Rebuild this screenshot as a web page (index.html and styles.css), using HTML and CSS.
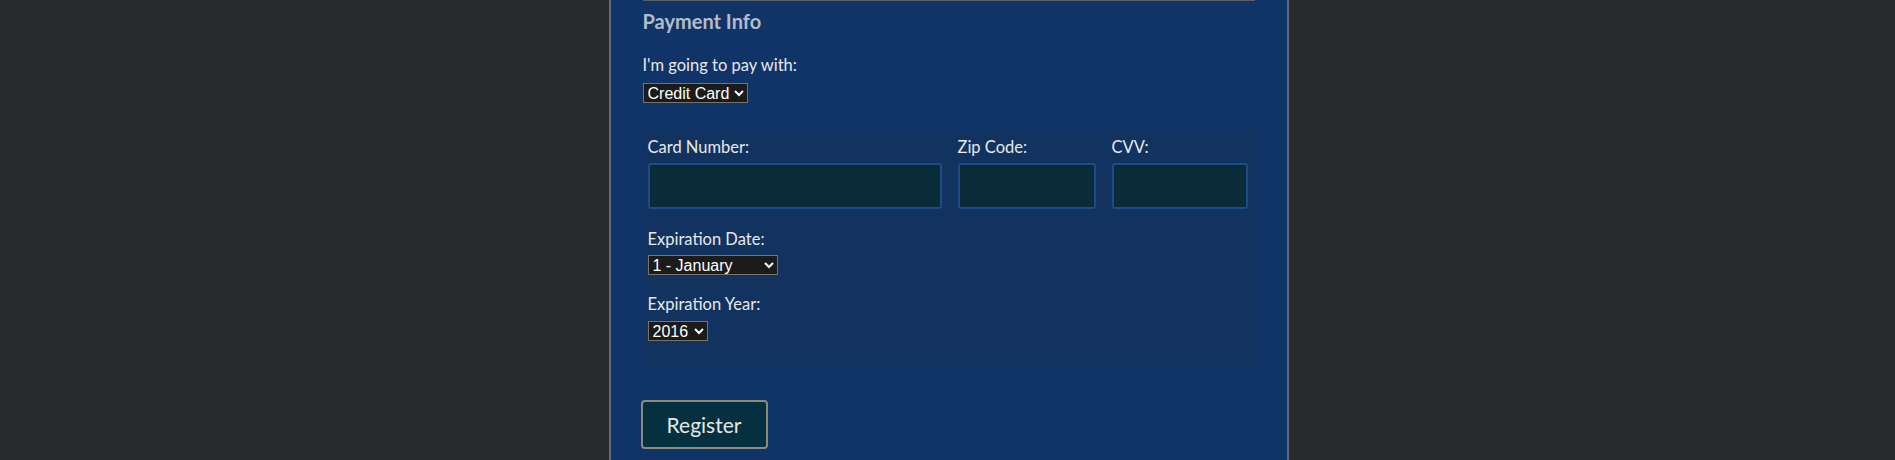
FILE: index.html
```html
<!DOCTYPE html>
<html>
<head>
<meta charset="utf-8">
<link rel="stylesheet" href="styles.css">
</head>
<body>
<div class="page">
  <form class="panel">
    <div class="rule"></div>
    <h2 class="legend">Payment Info</h2>
    <label class="lbl pay-lbl">I'm going to pay with:</label>
    <select class="sel sel-pay"><option>Credit Card</option></select>
    <div class="card">
      <div class="grid">
        <div class="field">
          <label class="lbl">Card Number:</label>
          <input class="txt" type="text">
        </div>
        <div class="field">
          <label class="lbl">Zip Code:</label>
          <input class="txt" type="text">
        </div>
        <div class="field">
          <label class="lbl">CVV:</label>
          <input class="txt" type="text">
        </div>
      </div>
      <label class="lbl exp-lbl">Expiration Date:</label>
      <select class="sel sel-month"><option>1 - January</option></select>
      <label class="lbl year-lbl">Expiration Year:</label>
      <select class="sel sel-year"><option>2016</option></select>
    </div>
    <button class="btn" type="button">Register</button>
  </form>
</div>
</body>
</html>
```
FILE: styles.css
```css
html, body {
  margin: 0;
  padding: 0;
  background: #272b2c;
  height: 100%;
  overflow: hidden;
}
.page {
  display: flex;
  justify-content: center;
  padding-left: 2px;
}
.panel {
  width: 612px;
  background: #113468;
  border-left: 2px solid #5f6b7a;
  border-right: 2px solid #5f6b7a;
  padding: 0 32px 40px 32px;
  font-family: "Lato", "Noto Sans", sans-serif;
  color: #e8e8e8;
  display: flex;
  flex-direction: column;
  align-items: flex-start;
  min-height: 500px;
}
.rule {
  align-self: stretch;
  height: 1px;
  background: #5a5f66;
}
.legend {
  margin: 8px 0 0 0;
  font-size: 20px;
  font-weight: 700;
  color: #b4bcc8;
  line-height: 24px;
}
.lbl {
  display: block;
  font-size: 16.5px;
  line-height: 20px;
  color: #e8e8e8;
}
.pay-lbl {
  margin-top: 22px;
}
.sel {
  font-family: "Liberation Sans", Arial, sans-serif;
  font-size: 16px;
  color: #ffffff;
  background-color: #1b1b1b;
  border: 1px solid #7a7264;
  height: 20px;
  margin: 0;
  border-radius: 0;
  color-scheme: dark;
}
.sel-pay {
  margin-top: 8px;
  width: 105px;
}
.card {
  align-self: stretch;
  margin-top: 29px;
  background: #123260;
  padding: 5px 6px 24px 5px;
}
.grid {
  display: grid;
  grid-template-columns: 294px 138px 136px;
  column-gap: 16px;
}
.txt {
  box-sizing: border-box;
  width: 100%;
  height: 46px;
  margin-top: 6px;
  background: #0a2b38;
  border: 2px solid #1f4a86;
  border-radius: 3px;
  color: #e8e8e8;
  outline: none;
}
.exp-lbl {
  margin-top: 20px;
}
.year-lbl {
  margin-top: 19px;
}
.sel-month {
  margin-top: 6px;
  width: 130px;
  display: block;
}
.sel-year {
  margin-top: 7px;
  width: 60px;
  display: block;
}
.btn {
  margin-top: 35px;
  margin-left: -2px;
  width: 127px;
  height: 49px;
  background: #04303f;
  border: 2px solid #8c8a7a;
  border-radius: 4px;
  color: #e6e6e6;
  font-family: "Lato", "Noto Sans", sans-serif;
  font-size: 21px;
}
```
